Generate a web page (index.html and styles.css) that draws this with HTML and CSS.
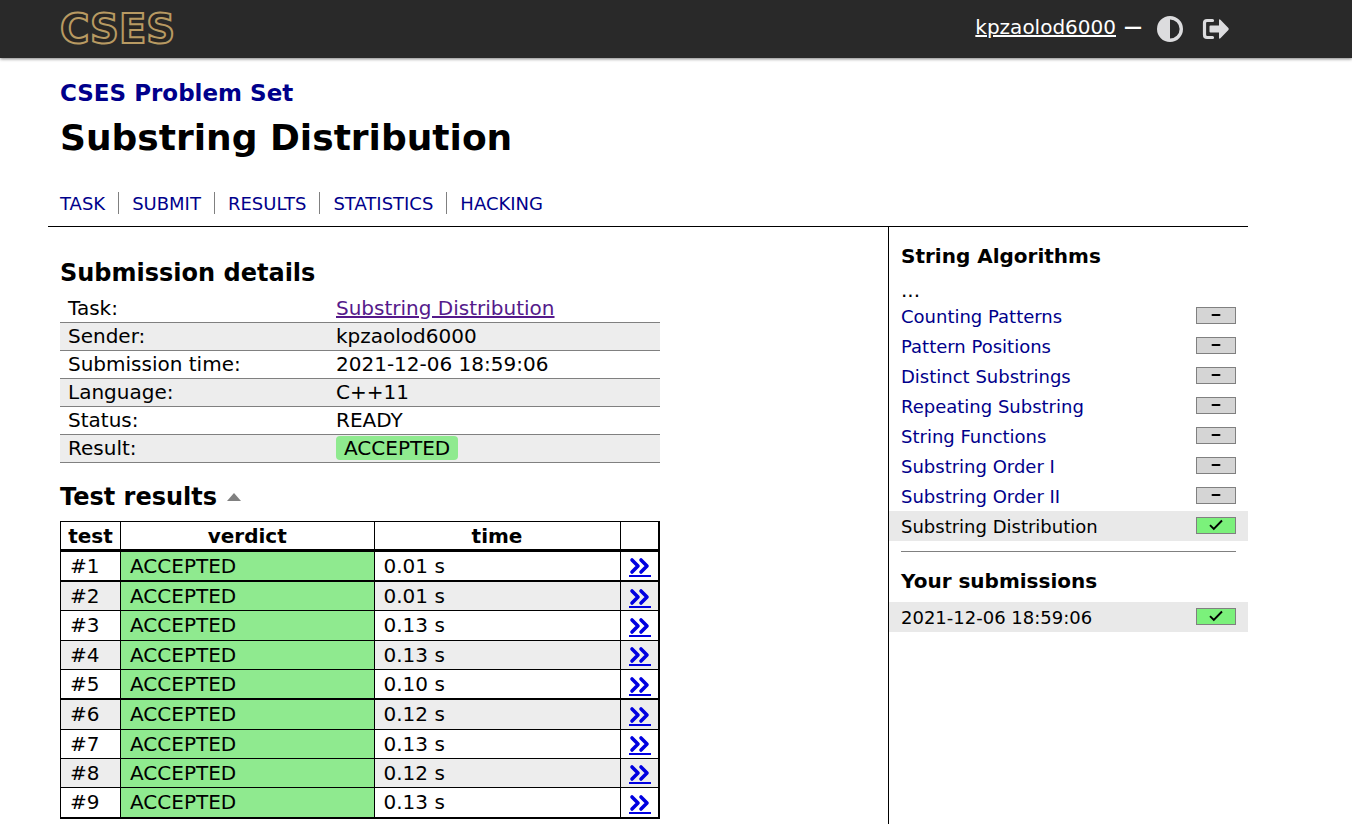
FILE: index.html
```
<!DOCTYPE html>
<html lang="en">
<head>
<meta charset="utf-8">
<title>CSES - Substring Distribution</title>
<link rel="stylesheet" href="styles.css">
</head>
<body>
<svg class="sprite" aria-hidden="true">
  <symbol id="more" viewBox="0 0 22 18"><path d="M3 3l6 6L3 15M12 3l6 6L12 15" fill="none" stroke="currentColor" stroke-width="3.600" stroke-linecap="round" stroke-linejoin="round"/></symbol>
  <symbol id="check" viewBox="0 0 16 12"><path d="M2 6.200L5.800 10L14 1.500" fill="none" stroke="currentColor" stroke-width="1.900"/></symbol>
  <symbol id="dash" viewBox="0 0 16 12"><path d="M4.500 6h7" fill="none" stroke="currentColor" stroke-width="2" stroke-linecap="round"/></symbol>
</svg>
<header class="topbar">
  <div class="topbar-inner">
    <a class="logo" href="#">CSES</a>
    <div class="account">
      <a class="user" href="#">kpzaolod6000</a>
      <span class="separator">—</span>
      <button class="icon-button" type="button" aria-label="Toggle theme">
        <svg width="26" height="26" viewBox="0 0 26 26"><circle cx="13" cy="13" r="11.300" fill="none" stroke="currentColor" stroke-width="3.400"/><path d="M13 1A12 12 0 0 0 13 25Z" fill="currentColor"/></svg>
      </button>
      <a class="icon-button logout" href="#" aria-label="Log out">
        <svg width="28" height="22" viewBox="0 0 28 22"><path d="M10.500 2.500H5Q2.500 2.500 2.500 5v11.500Q2.500 19.500 5 19.500h5.500" fill="none" stroke="currentColor" stroke-width="3.200" stroke-linecap="round"/><path d="M8.500 7.500h8.500V2.200q0-1.700 1.400-.5l8 8.400q.8.900 0 1.800l-8 8.400q-1.400 1.200-1.400-.5V14.500H8.500q-1 0-1-1v-5q0-1 1-1z" fill="currentColor"/></svg>
      </a>
    </div>
  </div>
</header>
<div class="page">
  <div class="title-block">
    <a class="course" href="#">CSES Problem Set</a>
    <h1>Substring Distribution</h1>
    <nav class="tabs">
      <a href="#">TASK</a>
      <a href="#">SUBMIT</a>
      <a href="#">RESULTS</a>
      <a href="#">STATISTICS</a>
      <a href="#">HACKING</a>
    </nav>
  </div>
  <div class="columns">
    <main class="content">
      <h2>Submission details</h2>
      <table class="details">
        <tr><th scope="row">Task:</th><td><a class="visited" href="#">Substring Distribution</a></td></tr>
        <tr><th scope="row">Sender:</th><td>kpzaolod6000</td></tr>
        <tr><th scope="row">Submission time:</th><td>2021-12-06 18:59:06</td></tr>
        <tr><th scope="row">Language:</th><td>C++11</td></tr>
        <tr><th scope="row">Status:</th><td>READY</td></tr>
        <tr><th scope="row">Result:</th><td><span class="badge">ACCEPTED</span></td></tr>
      </table>
      <h2 class="results-title">Test results <span class="caret"></span></h2>
      <table class="results">
        <thead>
          <tr><th class="col-test">test</th><th class="col-verdict">verdict</th><th class="col-time">time</th><th class="col-more"></th></tr>
        </thead>
        <tbody>
          <tr><td>#1</td><td class="ok">ACCEPTED</td><td>0.01 s</td><td class="go"><a class="more" href="#" aria-label="Test 1 details"><svg width="22" height="18"><use href="#more"/></svg></a></td></tr>
          <tr><td>#2</td><td class="ok">ACCEPTED</td><td>0.01 s</td><td class="go"><a class="more" href="#" aria-label="Test 2 details"><svg width="22" height="18"><use href="#more"/></svg></a></td></tr>
          <tr><td>#3</td><td class="ok">ACCEPTED</td><td>0.13 s</td><td class="go"><a class="more" href="#" aria-label="Test 3 details"><svg width="22" height="18"><use href="#more"/></svg></a></td></tr>
          <tr><td>#4</td><td class="ok">ACCEPTED</td><td>0.13 s</td><td class="go"><a class="more" href="#" aria-label="Test 4 details"><svg width="22" height="18"><use href="#more"/></svg></a></td></tr>
          <tr><td>#5</td><td class="ok">ACCEPTED</td><td>0.10 s</td><td class="go"><a class="more" href="#" aria-label="Test 5 details"><svg width="22" height="18"><use href="#more"/></svg></a></td></tr>
          <tr><td>#6</td><td class="ok">ACCEPTED</td><td>0.12 s</td><td class="go"><a class="more" href="#" aria-label="Test 6 details"><svg width="22" height="18"><use href="#more"/></svg></a></td></tr>
          <tr><td>#7</td><td class="ok">ACCEPTED</td><td>0.13 s</td><td class="go"><a class="more" href="#" aria-label="Test 7 details"><svg width="22" height="18"><use href="#more"/></svg></a></td></tr>
          <tr><td>#8</td><td class="ok">ACCEPTED</td><td>0.12 s</td><td class="go"><a class="more" href="#" aria-label="Test 8 details"><svg width="22" height="18"><use href="#more"/></svg></a></td></tr>
          <tr><td>#9</td><td class="ok">ACCEPTED</td><td>0.13 s</td><td class="go"><a class="more" href="#" aria-label="Test 9 details"><svg width="22" height="18"><use href="#more"/></svg></a></td></tr>
        </tbody>
      </table>
    </main>
    <aside class="sidebar">
      <h3>String Algorithms</h3>
      <div class="ellipsis">...</div>
      <a class="item" href="#">Counting Patterns<span class="score"><svg width="16" height="12"><use href="#dash"/></svg></span></a>
      <a class="item" href="#">Pattern Positions<span class="score"><svg width="16" height="12"><use href="#dash"/></svg></span></a>
      <a class="item" href="#">Distinct Substrings<span class="score"><svg width="16" height="12"><use href="#dash"/></svg></span></a>
      <a class="item" href="#">Repeating Substring<span class="score"><svg width="16" height="12"><use href="#dash"/></svg></span></a>
      <a class="item" href="#">String Functions<span class="score"><svg width="16" height="12"><use href="#dash"/></svg></span></a>
      <a class="item" href="#">Substring Order I<span class="score"><svg width="16" height="12"><use href="#dash"/></svg></span></a>
      <a class="item" href="#">Substring Order II<span class="score"><svg width="16" height="12"><use href="#dash"/></svg></span></a>
      <a class="item current" href="#">Substring Distribution<span class="score full"><svg width="16" height="12"><use href="#check"/></svg></span></a>
      <hr>
      <h3 class="own">Your submissions</h3>
      <a class="item current" href="#">2021-12-06 18:59:06<span class="score full"><svg width="16" height="12"><use href="#check"/></svg></span></a>
    </aside>
  </div>
</div>
</body>
</html>
```
FILE: styles.css
```
* { box-sizing: border-box; }

body {
  margin: 0;
  min-height: 100vh;
  display: flex;
  flex-direction: column;
  background: #fff;
  color: #000;
  font: 20px/24px "DejaVu Sans", sans-serif;
}

h1, h2, h3 { margin: 0; }
a { color: #00008b; text-decoration: none; }
.sprite { display: none; }

.topbar {
  background: #292929;
  box-shadow: 0 1px 3px rgba(0, 0, 0, 0.5);
}
.topbar-inner {
  max-width: 1200px;
  margin-left: 48px;
  height: 58px;
  padding: 0 18px 0 12px;
  display: flex;
  align-items: center;
  justify-content: space-between;
}
.logo {
  font-size: 40px;
  line-height: 56px;
  font-weight: bold;
  color: #292623;
  -webkit-text-stroke: 2px #b89a62;
}
.account {
  display: flex;
  align-items: center;
  gap: 8px;
  color: #fff;
  padding-bottom: 4px;
}
.user { color: #fff; text-decoration: underline; }
.separator { font-size: 18px; font-weight: bold; }
.icon-button {
  display: flex;
  padding: 4px 0 0;
  margin-left: 7px;
  border: 0;
  background: none;
  color: #dcdcde;
}
.logout { margin-left: 11px; }

.page {
  flex: 1;
  width: 100%;
  max-width: 1248px;
  padding-left: 48px;
  display: flex;
  flex-direction: column;
}
.title-block {
  padding: 20px 12px 12px;
  border-bottom: 1px solid #000;
}
.course {
  display: block;
  font-size: 23px;
  line-height: 30px;
  font-weight: bold;
}
h1 { font-size: 36px; line-height: 60px; }
.tabs {
  display: flex;
  margin-top: 24px;
  font-size: 18px;
  line-height: 20px;
}
.tabs a { padding-top: 2px; }
.tabs a + a {
  margin-left: 13px;
  padding-left: 13px;
  border-left: 1px solid #808080;
}

.columns { flex: 1; display: flex; }
.content { flex: 1; padding: 31px 12px 5px; }
h2 { font-size: 24px; line-height: 30px; }
table { width: 100%; max-width: 600px; border-collapse: collapse; }

.details { margin-top: 6px; line-height: 26px; }
.details th, .details td {
  height: 28px;
  padding: 0 8px;
  border-bottom: 1px solid #808080;
  text-align: left;
  font-weight: normal;
}
.details th { width: 268px; }
.details tr:nth-child(even) { background: #ededed; }
.visited { color: #551a8b; text-decoration: underline; }
.badge {
  display: block;
  width: fit-content;
  padding: 0 8px;
  line-height: 24px;
  border-radius: 4px;
  background: #8fea8f;
}

.results-title {
  display: flex;
  align-items: center;
  gap: 10px;
  margin: 19px 0 9px;
}
.caret {
  border: 7px solid transparent;
  border-top: 0;
  border-bottom: 8px solid #808080;
}
.results { table-layout: fixed; line-height: 24px; height: 298px; }
.results th, .results td { border: 1px solid #000; padding: 0 8px 0 9px; text-align: left; }
.results th { height: 29px; padding: 2px 0 0; text-align: center; border-bottom-width: 3px; }
.results tr > :last-child { border-right-width: 2px; }
.results tbody tr:nth-child(4n+1) td { border-bottom-width: 2px; }
.results tbody tr:nth-child(even) { background: #ededed; }
.results .ok { background: #8fea8f; }
.col-test { width: 60px; }
.col-time { width: 246px; }
.col-more { width: 39px; }
.more {
  display: block;
  width: 22px;
  border-bottom: 2px solid #0000e0;
  color: #0000e0;
}
.more svg { display: block; }
.results .go { padding: 3px 0 0 8px; }

.sidebar {
  width: 360px;
  border-left: 1px solid #000;
  padding: 0 0 12px;
  font-size: 18px;
}
.sidebar h3 {
  font-size: 20px;
  line-height: 26px;
  padding: 16px 12px 0;
}
.ellipsis { padding: 10px 12px 0; font-size: 20px; line-height: 22px; }
.item {
  display: flex;
  align-items: center;
  justify-content: space-between;
  padding: 2px 12px 0;
  line-height: 28px;
}
.item.current { background: #e9e9e9; color: #000; }
.score {
  display: flex;
  align-items: center;
  justify-content: center;
  width: 40px;
  height: 17px;
  margin-bottom: 4px;
  border: 1px solid #808080;
  background: #d5d5d5;
  color: #000;
}
.score.full { background: #7bf17b; }
hr { margin: 10px 12px 0; border: 0; border-top: 1px solid #808080; }
.sidebar .own { padding-bottom: 8px; }
```
